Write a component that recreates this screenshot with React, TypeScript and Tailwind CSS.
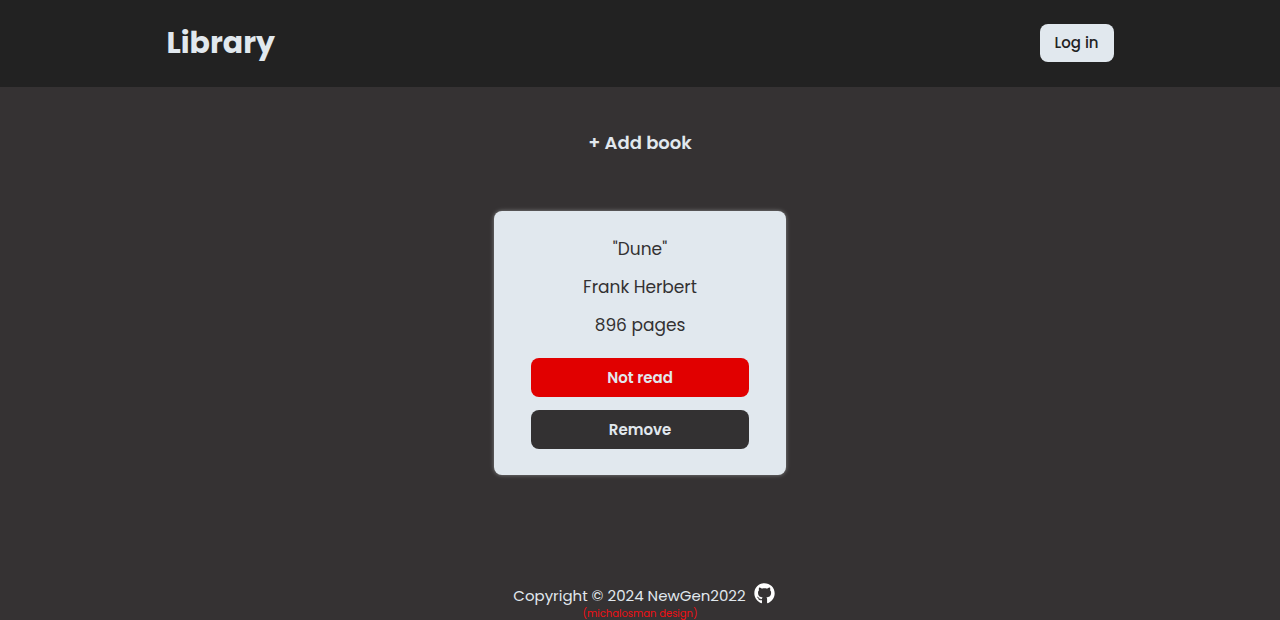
import { useState } from "react";
import { FaGithub } from "react-icons/fa";

type Book = { title: string; author: string; pages: number; read: boolean };

function BookCard({ book, onToggle, onRemove }: { book: Book; onToggle: () => void; onRemove: () => void }) {
  return (
    <article className="flex w-[292px] flex-col items-center rounded-lg bg-[#e1e8ee] px-[37px] pt-6 pb-[26px] text-[#333132] shadow-[0_0_4px_#848484]">
      <div className="flex flex-col items-center gap-[10px] text-[17px] leading-7">
        <h2>"{book.title}"</h2>
        <p>{book.author}</p>
        <p>{book.pages} pages</p>
      </div>
      <div className="mt-[19px] flex w-full flex-col gap-[13px] text-[15px] font-semibold text-[#e1e8ee]">
        <button
          type="button"
          onClick={onToggle}
          className={book.read ? "rounded-lg bg-[#3c8c40] pt-2 pb-[7px] leading-6" : "rounded-lg bg-[#e10000] pt-2 pb-[7px] leading-6"}
        >
          {book.read ? "Read" : "Not read"}
        </button>
        <button type="button" onClick={onRemove} className="rounded-lg bg-[#333132] pt-2 pb-[7px] leading-6">
          Remove
        </button>
      </div>
    </article>
  );
}

export default function App() {
  const [books, setBooks] = useState<Book[]>([{ title: "Dune", author: "Frank Herbert", pages: 896, read: false }]);

  return (
    <div className="flex min-h-screen flex-col bg-[#353233] font-['Poppins','Inter',sans-serif] text-[#e1e8ee]">
      <header className="flex items-center justify-between bg-[#222222] px-[13%] pt-[17px] pb-[19px]">
        <h1 className="text-[30px] leading-[51px] font-bold">Library</h1>
        <button type="button" className="rounded-lg bg-[#e1e8ee] px-[15px] py-[7px] text-[15px] leading-6 font-medium text-[#222222]">
          Log in
        </button>
      </header>
      <main className="flex flex-1 flex-col items-center pt-[42px]">
        <button type="button" className="text-lg font-semibold">
          + Add book
        </button>
        <div className="mt-[54px] flex flex-wrap justify-center gap-8">
          {books.map((book, i) => (
            <BookCard
              key={book.title}
              book={book}
              onToggle={() => setBooks(books.map((b, j) => (j === i ? { ...b, read: !b.read } : b)))}
              onRemove={() => setBooks(books.filter((_, j) => j !== i))}
            />
          ))}
        </div>
      </main>
      <footer className="flex flex-col items-center">
        <div className="flex items-center gap-2 pl-2 text-[15px] leading-6">
          <p>Copyright © 2024 NewGen2022</p>
          <a href="https://github.com/NewGen2022" aria-label="GitHub" className="pb-1 text-white">
            <FaGithub size={21} />
          </a>
        </div>
        <p className="text-[10px] leading-3 text-[#f00f14]">(michalosman design)</p>
      </footer>
    </div>
  );
}
